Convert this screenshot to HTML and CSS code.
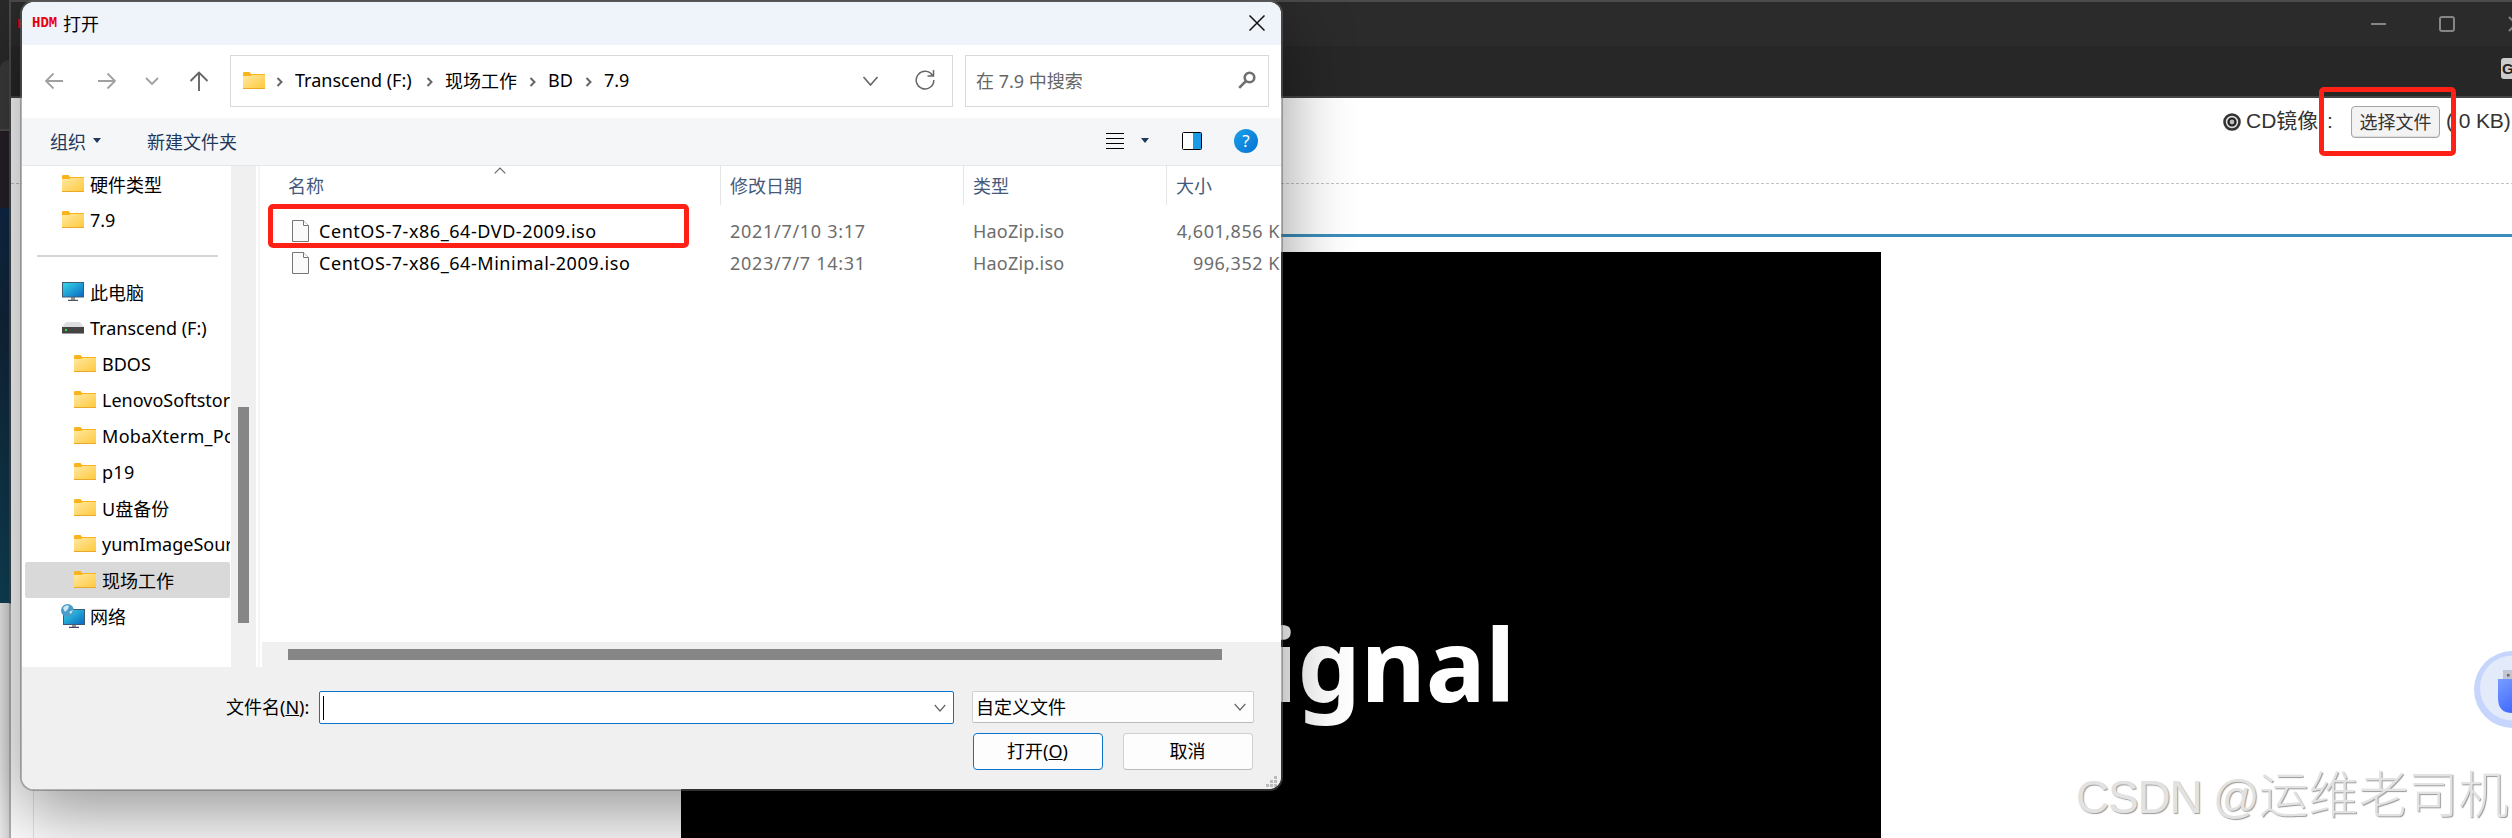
FILE: index.html
```html
<!DOCTYPE html>
<html lang="zh-CN">
<head>
    <meta charset="UTF-8">
    <meta name="viewport" content="width=device-width, initial-scale=1.0">
    <title>打开</title>
    <link rel="stylesheet" href="styles.css">
</head>
<body>
    <svg class="defs" width="0" height="0">
        <defs>
            <linearGradient id="gFolder" x1="0" y1="0" x2="1" y2="1">
                <stop offset="0" stop-color="#ffe9a3"/>
                <stop offset="1" stop-color="#ffc83a"/>
            </linearGradient>
            <linearGradient id="gScreen" x1="0" y1="0" x2="1" y2="1">
                <stop offset="0" stop-color="#36dbe6"/>
                <stop offset="1" stop-color="#0a66c2"/>
            </linearGradient>
            <linearGradient id="gUsb" x1="0" y1="0" x2="0.6" y2="1">
                <stop offset="0" stop-color="#7a9dff"/>
                <stop offset="1" stop-color="#3c66ff"/>
            </linearGradient>
        </defs>
        <symbol id="folder" viewBox="0 0 22 17">
            <path d="M0 1.2Q0 0 1.200 0H6.500L8 2H22V5H0Z" fill="#f9b31b"/>
            <path d="M0 4H7L9 3H22V17H0Z" fill="url(#gFolder)"/>
            <path d="M0 16.500H22" stroke="#eaa928"/>
        </symbol>
        <symbol id="chev" viewBox="0 0 16 10">
            <path d="M1 1L8 9L15 1" fill="none" stroke="currentColor" stroke-width="1.600"/>
        </symbol>
        <symbol id="sep" viewBox="0 0 7 10">
            <path d="M1.500 1L5.500 5L1.500 9" fill="none" stroke="#666" stroke-width="2"/>
        </symbol>
        <symbol id="file" viewBox="0 0 17 22">
            <path d="M.5.5H11.500L16.500 5.500V21.500H.5Z" fill="#fafafa" stroke="#777"/>
            <path d="M11.500.5V5.500H16.500" fill="#fff" stroke="#777"/>
        </symbol>
    </svg>

    <div class="desktop">
        <div class="strip">
            <div class="strip-tab"></div>
            <div class="strip-dark"></div>
            <div class="strip-blue"></div>
            <div class="strip-light"></div>
        </div>

        <!-- remote console window -->
        <div class="browser">
            <div class="browser-title">
                <span class="browser-logo">HDM</span>
                <svg width="141" height="20" viewBox="0 0 141 20">
                    <path d="M0 10H15" stroke="#858585" stroke-width="2"/>
                    <rect x="69" y="3" width="14" height="14" rx="2" fill="none" stroke="#858585" stroke-width="2"/>
                    <path d="M138 3L152 17M138 17L152 3" stroke="#858585" stroke-width="2"/>
                </svg>
            </div>
            <div class="browser-bar"><span class="g-badge">G</span></div>
            <div class="page">
                <div class="page-tools">
                    <svg class="radio" width="18" height="18" viewBox="0 0 18 18">
                        <circle cx="9" cy="9" r="7.500" fill="#ddd" stroke="#333" stroke-width="2.600"/>
                        <circle cx="9" cy="9" r="3.500" fill="#bbb" stroke="#222" stroke-width="2.200"/>
                    </svg>
                    <span class="cd-label">CD镜像</span>
                    <span class="cd-colon">:</span>
                    <button class="pick">选择文件</button>
                    <span class="cd-size">( 0 KB)</span>
                </div>
                <div class="page-sub"></div>
                <div class="page-body">
                    <div class="screen"><span>No Signal</span></div>
                </div>
            </div>
        </div>

        <svg class="usb" width="44" height="90" viewBox="0 0 44 90">
            <circle cx="44.500" cy="44.500" r="38.500" fill="#c6d5fb"/>
            <circle cx="44.500" cy="43" r="32.500" fill="#e3eafa"/>
            <rect x="35" y="25" width="20" height="10" fill="#c3c6d0"/>
            <rect x="39" y="29" width="2.500" height="2.500" fill="#666"/>
            <path d="M30 34H58V68H44Q30 68 30 53Z" fill="url(#gUsb)"/>
        </svg>

        <!-- file open dialog -->
        <div class="dialog">
            <div class="title">
                <span class="hdm">HDM</span>
                <span class="title-text">打开</span>
                <svg width="16" height="16" viewBox="0 0 16 16"><path d="M.5.5L15.500 15.500M15.500.5L.5 15.500" stroke="#111" stroke-width="1.500"/></svg>
            </div>

            <div class="nav">
                <div class="nav-btns">
                    <svg width="18" height="18" viewBox="0 0 18 18"><path d="M18 9H1M8.500 1.500L1 9L8.500 16.500" fill="none" stroke="#a0a0a0" stroke-width="1.800"/></svg>
                    <svg width="18" height="18" viewBox="0 0 18 18"><path d="M0 9H17M9.500 1.500L17 9L9.500 16.500" fill="none" stroke="#a0a0a0" stroke-width="1.800"/></svg>
                    <svg class="nav-recent" width="14" height="8" viewBox="0 0 14 8"><path d="M1 1L7 7L13 1" fill="none" stroke="#a0a0a0" stroke-width="1.800"/></svg>
                    <svg class="nav-up" width="20" height="20" viewBox="0 0 20 20"><path d="M10 20V1.500M1.500 10L10 1.500L18.500 10" fill="none" stroke="#666" stroke-width="1.900"/></svg>
                </div>
                <div class="address">
                    <svg width="22" height="17"><use href="#folder"/></svg>
                    <svg class="sep" width="7" height="10"><use href="#sep"/></svg>
                    <span class="crumb c1">Transcend (F:)</span>
                    <svg class="sep" width="7" height="10"><use href="#sep"/></svg>
                    <span class="crumb c2">现场工作</span>
                    <svg class="sep" width="7" height="10"><use href="#sep"/></svg>
                    <span class="crumb c3">BD</span>
                    <svg class="sep" width="7" height="10"><use href="#sep"/></svg>
                    <span class="crumb">7.9</span>
                    <svg class="addr-down" width="17" height="10"><use href="#chev"/></svg>
                    <svg width="20" height="20" viewBox="0 0 20 20"><path d="M17.500 5.500A8.800 8.800 0 1 0 18.800 10M18.500 0V6H12.500" fill="none" stroke="#666" stroke-width="1.500"/></svg>
                </div>
                <div class="search">
                    <span>在 7.9 中搜索</span>
                    <svg width="18" height="18" viewBox="0 0 18 18"><circle cx="11.500" cy="6.500" r="4.800" fill="none" stroke="#707070" stroke-width="2.600"/><path d="M8 10L1.200 16.800" stroke="#707070" stroke-width="2.600"/></svg>
                </div>
            </div>

            <div class="toolbar">
                <span>组织</span>
                <i class="tri"></i>
                <span class="new-folder">新建文件夹</span>
                <svg class="t-list" width="18" height="18" viewBox="0 0 18 18"><path d="M0 1.500H18M0 6.500H18M0 11.500H18M0 16.500H18" stroke="#000" stroke-width="1"/></svg>
                <i class="tri tri-view"></i>
                <svg class="t-pane" width="20" height="18" viewBox="0 0 20 18"><rect x=".5" y=".5" width="19" height="17" rx="1" fill="#fff" stroke="#000"/><rect x="11" y="1" width="8" height="16" fill="#1b9be6"/></svg>
                <span class="help">?</span>
            </div>

            <div class="main">
                <div class="tree">
                    <div class="item"><svg width="22" height="17"><use href="#folder"/></svg><span>硬件类型</span></div>
                    <div class="item"><svg width="22" height="17"><use href="#folder"/></svg><span>7.9</span></div>
                    <div class="line"></div>
                    <div class="item">
                        <svg width="22" height="19" viewBox="0 0 22 19"><path d="M9 15H13V18H9Z" fill="#999"/><path d="M6 18.300H16" stroke="#555" stroke-width="1.200"/><rect x=".5" y=".5" width="21" height="14.500" fill="url(#gScreen)" stroke="#3d5a72"/></svg>
                        <span>此电脑</span>
                    </div>
                    <div class="item">
                        <svg width="22" height="12" viewBox="0 0 22 12"><path d="M4 0H18L22 5H0Z" fill="#dcdee0"/><rect y="5" width="22" height="7" fill="#444"/><path d="M0 11.500H22" stroke="#999"/><rect x="3" y="7" width="2" height="2" fill="#35e035"/></svg>
                        <span>Transcend (F:)</span>
                    </div>
                    <div class="item sub"><svg width="22" height="17"><use href="#folder"/></svg><span>BDOS</span></div>
                    <div class="item sub"><svg width="22" height="17"><use href="#folder"/></svg><span>LenovoSoftstore</span></div>
                    <div class="item sub"><svg width="22" height="17"><use href="#folder"/></svg><span class="wide">MobaXterm_Portable</span></div>
                    <div class="item sub"><svg width="22" height="17"><use href="#folder"/></svg><span class="wide">p19</span></div>
                    <div class="item sub"><svg width="22" height="17"><use href="#folder"/></svg><span>U盘备份</span></div>
                    <div class="item sub"><svg width="22" height="17"><use href="#folder"/></svg><span>yumImageSource</span></div>
                    <div class="item sub selected"><svg width="22" height="17"><use href="#folder"/></svg><span>现场工作</span></div>
                    <div class="item net">
                        <svg width="24" height="24" viewBox="0 0 24 24"><path d="M11 20H15V23H11Z" fill="#999"/><path d="M8 23.300H18" stroke="#446" stroke-width="1.200"/><rect x="2.500" y="5.500" width="21" height="15" fill="url(#gScreen)" stroke="#3d5a72"/><circle cx="6.500" cy="6.500" r="6.500" fill="#4a9cc9"/><path d="M2 4Q5 0 8 2L7 5L4 8ZM8 8L12 6L10 10Z" fill="#cfe8f3"/></svg>
                        <span>网络</span>
                    </div>
                </div>
                <div class="vscroll"><div class="vthumb"></div></div>
                <div class="split"></div>
                <div class="files">
                    <div class="head">
                        <span class="col-name">名称<svg class="sort" width="12" height="7" viewBox="0 0 12 7"><path d="M.7 6.300L6 1L11.300 6.300" fill="none" stroke="#666" stroke-width="1.200"/></svg></span>
                        <span class="col-date">修改日期</span>
                        <span class="col-type">类型</span>
                        <span class="col-size">大小</span>
                    </div>
                    <div class="rows">
                        <div class="row">
                            <span class="cell-name"><svg width="17" height="22"><use href="#file"/></svg><b>CentOS-7-x86_64-DVD-2009.iso</b></span>
                            <span class="cell-date">2021/7/10 3:17</span>
                            <span class="cell-type">HaoZip.iso</span>
                            <span class="cell-size">4,601,856 KB</span>
                        </div>
                        <div class="row">
                            <span class="cell-name"><svg width="17" height="22"><use href="#file"/></svg><b>CentOS-7-x86_64-Minimal-2009.iso</b></span>
                            <span class="cell-date">2023/7/7 14:31</span>
                            <span class="cell-type">HaoZip.iso</span>
                            <span class="cell-size">996,352 KB</span>
                        </div>
                    </div>
                    <div class="hscroll"><div class="hthumb"></div></div>
                </div>
            </div>

            <div class="footer">
                <div class="name-row">
                    <span class="label">文件名(<u>N</u>):</span>
                    <div class="name-box"><i class="caret"></i><svg width="12" height="8"><use href="#chev"/></svg></div>
                    <div class="filter"><span>自定义文件</span><svg width="12" height="8"><use href="#chev"/></svg></div>
                </div>
                <div class="btn-row">
                    <button class="btn primary">打开(<u>O</u>)</button>
                    <button class="btn">取消</button>
                </div>
                <svg class="grip" width="12" height="12" viewBox="0 0 12 12"><path d="M8 0h3v3h-3zM4 4h3v3h-3zM8 4h3v3h-3zM0 8h3v3h-3zM4 8h3v3h-3zM8 8h3v3h-3z" fill="#bbb"/></svg>
            </div>
        </div>

        <div class="mark mark-file"></div>
        <div class="mark mark-pick"></div>
        <div class="watermark"><span>CSDN @</span>运维老司机</div>
    </div>
</body>
</html>
```

FILE: styles.css
```css
* {
    margin: 0;
    padding: 0;
    box-sizing: border-box;
}

body {
    font-family: 'Noto Sans', 'Noto Sans CJK SC', sans-serif;
    font-size: 18px;
    overflow: hidden;
}

svg {
    display: block;
    flex-shrink: 0;
}

.defs {
    position: absolute;
}

.desktop {
    position: relative;
    width: 2512px;
    height: 838px;
    background: #2a2a2a;
    overflow: hidden;
}

/* whatever peeks out on the far left */
.strip {
    width: 10px;
    height: 838px;
    padding-top: 60px;
}

.strip-tab {
    height: 71px;
    background: #3a3a3a;
    border-radius: 9px 0 0 0;
    border-bottom: 2px solid #4c4c4c;
}

.strip-dark {
    height: 77px;
    background: #241f25;
}

.strip-blue {
    height: 395px;
    background: linear-gradient(#0e2845, #11253a 30%, #0f4155);
}

.strip-light {
    height: 235px;
    background: linear-gradient(to right, #ececec, #d4d4d4);
}

/* browser window */
.browser {
    position: absolute;
    left: 9px;
    top: 0;
    width: 2520px;
    height: 850px;
    border: 2px solid #999;
    border-image: linear-gradient(#4b4b4b 97px, #4a4a4e 98px, #33424f 603px, #b0b0b0 604px) 2;
    border-right: none;
    display: flex;
    flex-direction: column;
    background: #fff;
}

.browser-title {
    height: 44px;
    background: #2b2b2b;
    display: flex;
    align-items: center;
    justify-content: space-between;
    padding-right: 17px;
    flex-shrink: 0;
}

.browser-logo {
    font: bold 13px 'Liberation Mono', monospace;
    color: #e60012;
    padding-left: 6px;
}

.browser-bar {
    height: 52px;
    background: #272727;
    border-bottom: 2px solid #454545;
    padding: 12px 8px 0 0;
    display: flex;
    justify-content: flex-end;
    flex-shrink: 0;
}

.g-badge {
    width: 20px;
    height: 21px;
    border-radius: 3px;
    background: #ccc;
    color: #222;
    font: bold 15px/21px 'Liberation Sans', sans-serif;
    padding-left: 1px;
}

.page {
    flex: 1;
    display: flex;
    flex-direction: column;
    color: #333;
    font-family: 'Liberation Sans', 'Noto Sans CJK SC', sans-serif;
}

.page-tools {
    height: 86px;
    border-bottom: 1px dashed #c4c4c4;
    display: flex;
    align-items: flex-start;
    padding: 8px 0 0 2212px;
    font-size: 21px;
    line-height: 30px;
    white-space: nowrap;
}

.radio {
    margin-top: 7px;
}

.cd-label {
    width: 81px;
    margin-left: 5px;
}

.cd-colon {
    width: 24px;
}

.pick {
    width: 89px;
    height: 32px;
    border: 1px solid #a5a5a5;
    border-radius: 4px;
    background: #f3f3f3;
    box-shadow: inset 0 -1px 1px #ddd;
    font: 18px 'Liberation Sans', 'Noto Sans CJK SC', sans-serif;
    color: #333;
    padding-bottom: 2px;
}

.cd-size {
    margin-left: 6px;
    letter-spacing: -0.1px;
}

.page-sub {
    height: 53px;
    margin-left: 22px;
    border-bottom: 3px solid #3c8dbc;
}

.page-body {
    flex: 1;
    margin-left: 22px;
    border-left: 1px solid #e4e4e4;
    padding: 15px 0 0 647px;
}

.screen {
    width: 1200px;
    height: 640px;
    background: #000;
    color: #fff;
    font: bold 100px/800px 'Noto Sans', sans-serif;
    text-align: center;
    overflow: hidden;
}

.screen span {
    display: block;
    margin: 11px 4px 0 0;
}

.usb {
    position: absolute;
    right: 0;
    top: 645px;
}

/* dialog */
.dialog {
    position: absolute;
    left: 20px;
    top: 0;
    width: 1263px;
    height: 791px;
    border: 2px solid rgba(100, 100, 100, 0.5);
    border-radius: 14px;
    background: #fff;
    background-clip: padding-box;
    box-shadow: 0 22px 70px rgba(0, 0, 0, 0.42);
    display: flex;
    flex-direction: column;
    overflow: hidden;
    color: #000;
}

.title {
    height: 43px;
    background: #eff3fa;
    display: flex;
    align-items: center;
    padding: 0 16px 2px 10px;
    flex-shrink: 0;
}

.title svg {
    margin-left: auto;
}

.hdm {
    width: 31px;
    font: bold 14px 'Liberation Mono', monospace;
    color: #e60012;
}

.nav {
    height: 73px;
    display: flex;
    align-items: center;
    padding: 0 12px 1px 23px;
    flex-shrink: 0;
}

.nav-btns {
    width: 185px;
    display: flex;
    align-items: center;
    gap: 35px;
}

.nav-recent {
    margin-left: -6px;
}

.nav-up {
    margin-left: -5px;
}

.address {
    width: 723px;
    height: 52px;
    border: 1px solid #d9d9d9;
    display: flex;
    align-items: center;
    padding: 0 17px 2px 12px;
}

.sep {
    margin-left: 11px;
    margin-top: 3px;
}

.crumb {
    margin-left: 12px;
    white-space: nowrap;
}

.c1 {
    width: 120px;
}

.c2 {
    width: 73px;
}

.c3 {
    width: 26px;
}

.addr-down {
    margin: 2px 36px 0 auto;
    color: #666;
}

.search {
    width: 304px;
    height: 52px;
    margin-left: 12px;
    border: 1px solid #d9d9d9;
    display: flex;
    align-items: center;
    justify-content: space-between;
    padding: 0 12px 2px 10px;
    color: #666;
}

.toolbar {
    height: 48px;
    background: #f5f6f8;
    border-bottom: 1px solid #e5e7ea;
    display: flex;
    align-items: center;
    padding: 0 23px 2px 28px;
    color: #1e395b;
    flex-shrink: 0;
}

.tri {
    border: 4px solid transparent;
    border-top: 5px solid #1e395b;
    border-bottom: none;
    margin-left: 7px;
}

.new-folder {
    margin-left: 46px;
}

.t-list {
    margin-left: auto;
}

.tri-view {
    margin-left: 17px;
}

.t-pane {
    margin-left: 33px;
}

.help {
    width: 24px;
    height: 24px;
    margin-left: 32px;
    border-radius: 50%;
    background: linear-gradient(135deg, #1ba1e8, #0571d3);
    color: #fff;
    font-size: 17px;
    line-height: 23px;
    text-align: center;
}

.main {
    height: 501px;
    display: flex;
    flex-shrink: 0;
}

.tree {
    width: 209px;
    padding: 0 1px 0 3px;
    overflow: hidden;
}

.item {
    height: 36px;
    display: flex;
    align-items: center;
    padding: 0 0 1px 37px;
    gap: 6px;
    white-space: nowrap;
    border-radius: 2px;
    overflow: hidden;
}

.item.sub {
    padding-left: 49px;
}

.item.net {
    padding-left: 36px;
    gap: 5px;
}

.item .wide {
    letter-spacing: 0.3px;
}

.selected {
    background: #d9d9d9;
}

.line {
    height: 36px;
    margin: 0 12px;
    display: flex;
    align-items: center;
}

.line::before {
    content: '';
    flex: 1;
    height: 2px;
    background: #d5d5d5;
}

.vscroll {
    width: 25px;
    background: #f0f0f0;
    padding: 241px 7px 0;
}

.vthumb {
    height: 216px;
    background: #868686;
}

.split {
    width: 6px;
    border-left: 2px solid #fff;
    border-right: 2px solid #fff;
    background: #f5f5f5;
}

.files {
    flex: 1;
    min-width: 0;
    display: flex;
    flex-direction: column;
    overflow: hidden;
}

.head {
    height: 39px;
    display: flex;
    line-height: 40px;
    color: #44597a;
    white-space: nowrap;
}

.head span {
    border-right: 1px solid #e5e5e5;
    padding-left: 9px;
}

.head .col-name {
    width: 459px;
    padding-left: 26px;
    display: flex;
}

.sort {
    margin: 1px 0 0 170px;
}

.head .col-date {
    width: 243px;
}

.head .col-type {
    width: 203px;
}

.head .col-size {
    border: none;
}

.rows {
    flex: 1;
    padding-top: 10px;
}

.row {
    height: 32px;
    display: flex;
    align-items: center;
    color: #6d6d6d;
    white-space: nowrap;
}

.cell-name {
    width: 468px;
    padding-left: 30px;
    display: flex;
    align-items: center;
    gap: 10px;
    color: #000;
    flex-shrink: 0;
    letter-spacing: 0.55px;
}

.cell-name b {
    font-weight: normal;
}

.cell-date {
    width: 243px;
    flex-shrink: 0;
    letter-spacing: 0.7px;
}

.cell-type {
    width: 200px;
    flex-shrink: 0;
    letter-spacing: 0.2px;
}

.cell-size {
    width: 119px;
    text-align: right;
    flex-shrink: 0;
    letter-spacing: 0.5px;
}

.hscroll {
    height: 25px;
    background: #f0f0f0;
    padding: 7px 59px 0 26px;
}

.hthumb {
    height: 11px;
    background: #868686;
}

.footer {
    position: relative;
    flex: 1;
    background: #f0f0f0;
    padding: 24px 28px 0 204px;
}

.name-row {
    display: flex;
    line-height: 32px;
}

.label {
    width: 93px;
    white-space: nowrap;
    flex-shrink: 0;
}

.name-box {
    width: 635px;
    height: 33px;
    border: 1px solid #0a73c8;
    border-radius: 2px;
    background: #fff;
    display: flex;
    align-items: center;
    justify-content: space-between;
    padding: 0 7px 0 3px;
    color: #666;
    flex-shrink: 0;
}

.caret {
    width: 1px;
    height: 24px;
    background: #000;
}

.filter {
    width: 282px;
    height: 32px;
    margin-left: 18px;
    border: 1px solid #d0d0d0;
    border-bottom-color: #bbb;
    border-radius: 2px;
    background: #fdfdfd;
    display: flex;
    align-items: center;
    justify-content: space-between;
    padding: 0 7px 0 3px;
    flex-shrink: 0;
}

.filter svg {
    color: #666;
}

.btn-row {
    display: flex;
    justify-content: flex-end;
    gap: 20px;
    margin-top: 9px;
}

.btn {
    width: 130px;
    height: 37px;
    border: 1px solid #d0d0d0;
    border-bottom-color: #bbb;
    border-radius: 4px;
    background: #fdfdfd;
    font: inherit;
    color: #000;
    padding: 0 1px 3px 0;
}

.primary {
    border-color: #0a73c8;
}

.grip {
    position: absolute;
    right: 3px;
    bottom: 1px;
}

/* red highlight boxes */
.mark {
    position: absolute;
    border: 5px solid #ff2116;
    border-radius: 5px;
}

.mark-file {
    left: 268px;
    top: 204px;
    width: 421px;
    height: 44px;
}

.mark-pick {
    left: 2319px;
    top: 87px;
    width: 137px;
    height: 69px;
}

.watermark {
    position: absolute;
    left: 2076px;
    top: 760px;
    font: 300 50px/72px 'Liberation Sans', 'Noto Sans CJK SC', sans-serif;
    color: #e2e2e2;
    text-shadow: 1px 1px 1px #999;
    white-space: nowrap;
}

.watermark span {
    font-size: 46px;
    letter-spacing: -1.2px;
}
```
